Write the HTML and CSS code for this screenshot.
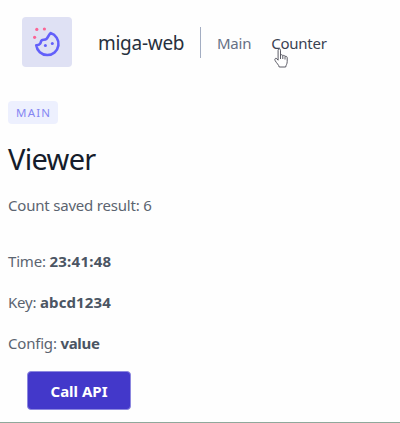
FILE: index.html
```html
<!DOCTYPE html>
<html lang="en">
<head>
<meta charset="utf-8">
<title>miga-web</title>
<link rel="stylesheet" href="styles.css">
</head>
<body>
<div class="page">
  <header class="header">
    <div class="logo">
      <svg width="50" height="50" viewBox="0 0 50 50" fill="none">
        <path d="M28.5 16.1A11.2 11.2 0 1 1 14.2 28.2C16 28.1 17.3 27.7 18.1 26.7C19 25.7 18.5 24.4 19.8 23.3C20.9 22.3 22.8 23.3 24.4 21.9C26.4 20.3 26.6 17.8 28.5 16.1Z" stroke="#6360fa" stroke-width="2.6" stroke-linejoin="round"/>
        <g fill="#6360fa"><circle cx="23.4" cy="28.5" r="1.5"/><circle cx="30.3" cy="26.5" r="1.5"/></g>
        <g fill="#fb6595"><circle cx="14.8" cy="12.4" r="1.6"/><circle cx="22.4" cy="12" r="1.6"/><circle cx="12.6" cy="20.3" r="1.6"/></g>
      </svg>
    </div>
    <div class="brand">miga-web</div>
    <nav class="nav">
      <a class="link">Main</a>
      <a class="link active">Counter
        <svg class="pointer" width="14" height="20" viewBox="0 0 14 20"><path d="M4.1 12.2V2.2C4.1.3 6.5.3 6.5 2.2V7.2C7.2 6.3 8.7 6.7 8.8 7.8C9.6 7 10.9 7.4 11 8.5C12 7.9 13.2 8.5 13.2 9.8V13.6C13.2 16 12 17 11.7 19H5.2C4.9 16.9 2.4 15 1.2 12.7C.1 10.7 1.8 9.6 3 10.9ZM6.5 7V11M8.8 8V11M11 8.7V11.5" fill="#fff" stroke="#4a4a55" stroke-width=".9" stroke-linejoin="round"/></svg>
      </a>
    </nav>
  </header>
  <main class="content">
    <span class="tag">MAIN</span>
    <h1 class="title">Viewer</h1>
    <p class="text count">Count saved result: 6</p>
    <p class="text time">Time: <strong>23:41:48</strong></p>
    <p class="text key">Key: <strong>abcd1234</strong></p>
    <p class="text config">Config: <strong>value</strong></p>
    <button class="button">Call API</button>
  </main>
  <div class="rule"></div>
</div>
</body>
</html>
```
FILE: styles.css
```css
* { box-sizing: border-box; }
body {
  margin: 0;
  background: #fefefe;
  font-family: "Segoe UI", "Noto Sans", "Open Sans", sans-serif;
  color: #5b6470;
}
.page {
  height: 423px;
  display: flex;
  flex-direction: column;
  overflow: hidden;
}
.header {
  display: flex;
  align-items: center;
  height: 84px;
  padding-left: 22px;
}
.logo {
  width: 50px;
  height: 50px;
  border-radius: 4px;
  background: #dfe1f4;
}
.logo svg { display: block; }
.brand {
  width: 103px;
  height: 31px;
  margin-left: 26px;
  padding-top: 1px;
  border-right: 1px solid #a3adc2;
  font-size: 19px;
  line-height: 31px;
  letter-spacing: -0.28px;
  color: #27303d;
  white-space: nowrap;
}
.nav {
  display: flex;
  gap: 20px;
  margin-left: 16px;
  padding-top: 2px;
  font-size: 15px;
  line-height: 24px;
  letter-spacing: -0.25px;
}
.link { color: #667085; }
.active { position: relative; color: #3a4252; }
.pointer {
  position: absolute;
  left: 3px;
  top: 17px;
}
.content {
  display: flex;
  flex-direction: column;
  align-items: flex-start;
  padding-left: 8px;
}
.tag {
  width: 50px;
  height: 23px;
  margin-top: 17px;
  padding-left: 8px;
  border-radius: 4px;
  background: #edf0fe;
  color: #8586f2;
  font-size: 11.5px;
  line-height: 24px;
  letter-spacing: 1.2px;
}
.title {
  margin: 17px 0 0;
  font-size: 29px;
  font-weight: 400;
  line-height: 36px;
  letter-spacing: -0.7px;
  color: #151c2b;
}
.text {
  margin: 0;
  font-size: 15px;
  line-height: 24px;
  letter-spacing: -0.2px;
  white-space: nowrap;
}
.text strong {
  color: #4b5563;
  letter-spacing: 0;
}
.time strong { letter-spacing: 0.25px; }
.key strong { letter-spacing: 0.1px; }
.config strong { letter-spacing: -0.3px; }
.count { margin-top: 16px; }
.time { margin-top: 32px; }
.key, .config { margin-top: 17px; }
.button {
  width: 104px;
  height: 39px;
  margin: 16px 0 0 19px;
  padding: 1px 0 0;
  border: 1px solid #8d88df;
  border-radius: 4px;
  background: #4338ca;
  color: #fff;
  font: 700 15px/24px "Segoe UI", "Noto Sans", sans-serif;
}
.rule {
  height: 1px;
  margin-top: auto;
  background: #8fa89b;
}
```
